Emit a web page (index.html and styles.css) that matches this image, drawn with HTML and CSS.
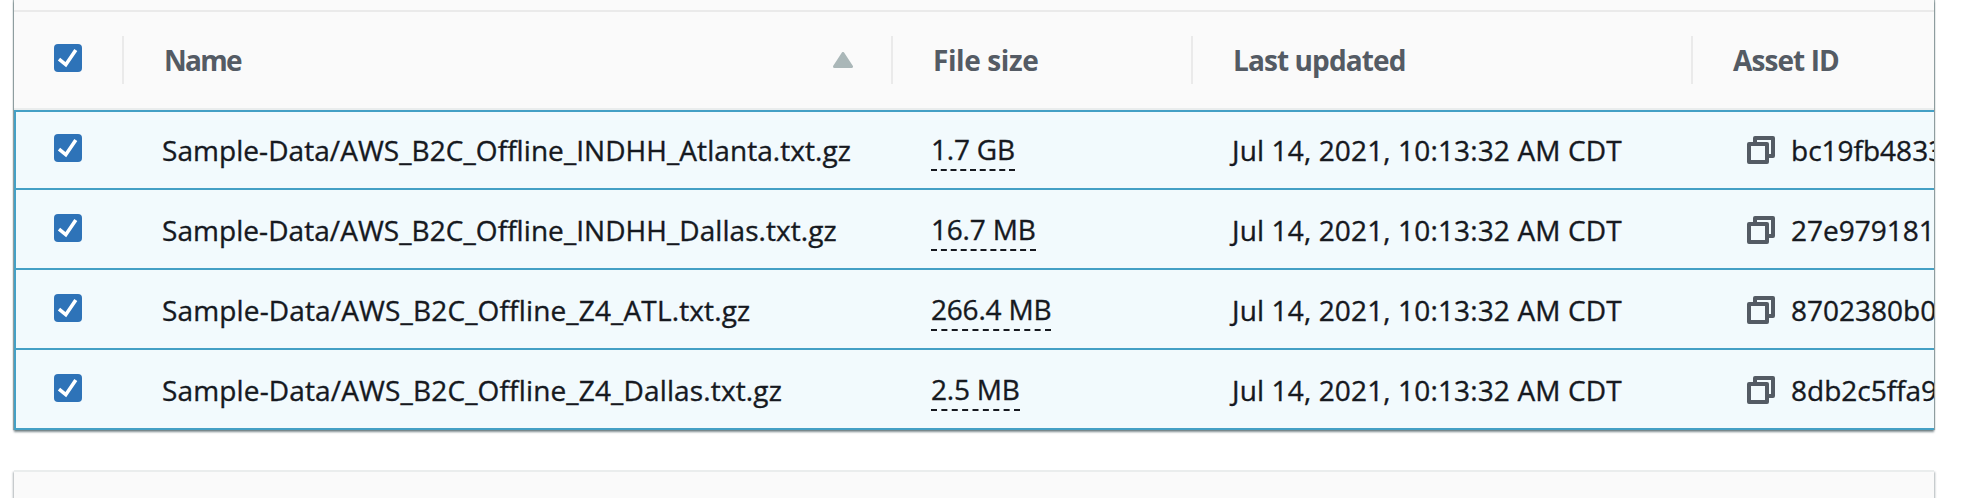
FILE: index.html
```
<!DOCTYPE html>
<html lang="en"><head><meta charset="utf-8"><title>Assets</title><link rel="stylesheet" href="styles.css"></head>
<body>
<svg class="defs" width="0" height="0"><defs>
<symbol id="check" viewBox="0 0 28 28"><rect width="28" height="28" rx="4" fill="#2e73b8"/><path d="M5 15.2 11.8 20.7 21.8 6" fill="none" stroke="#fff" stroke-width="3.6"/></symbol>
<symbol id="copy" viewBox="0 0 28 28"><path d="M8 6V2H26V20H22M2 8H20V26H2Z" fill="none" stroke="#545b64" stroke-width="4" stroke-linejoin="round"/></symbol>
</defs></svg>
<main class="page">
<section class="panel">
<div class="toolbar"></div>
<div class="row head">
<div class="cell select"><svg class="box"><use href="#check"/></svg></div>
<div class="cell name"><span class="t">Name</span><svg class="sort" viewBox="0 0 20 16"><path d="M10 1.5 18.5 14.5H1.5Z" fill="#aab7b8" stroke="#aab7b8" stroke-width="3" stroke-linejoin="round"/></svg></div>
<div class="cell size"><span class="t">File size</span></div>
<div class="cell date"><span class="t">Last updated</span></div>
<div class="cell asset"><span class="t">Asset ID</span></div>
</div>
<div class="row item"><div class="cell select"><svg class="box"><use href="#check"/></svg></div><div class="cell name"><span class="t">Sample-Data/AWS_B2C_Offline_INDHH_Atlanta.txt.gz</span></div><div class="cell size"><span class="dash">1.7 GB</span></div><div class="cell date"><span class="t">Jul 14, 2021, 10:13:32 AM CDT</span></div><div class="cell asset"><svg class="copy"><use href="#copy"/></svg><span class="t">bc19fb4833</span></div></div>
<div class="row item"><div class="cell select"><svg class="box"><use href="#check"/></svg></div><div class="cell name"><span class="t">Sample-Data/AWS_B2C_Offline_INDHH_Dallas.txt.gz</span></div><div class="cell size"><span class="dash">16.7 MB</span></div><div class="cell date"><span class="t">Jul 14, 2021, 10:13:32 AM CDT</span></div><div class="cell asset"><svg class="copy"><use href="#copy"/></svg><span class="t">27e979181</span></div></div>
<div class="row item wide"><div class="cell select"><svg class="box"><use href="#check"/></svg></div><div class="cell name"><span class="t">Sample-Data/AWS_B2C_Offline_Z4_ATL.txt.gz</span></div><div class="cell size"><span class="dash">266.4 MB</span></div><div class="cell date"><span class="t">Jul 14, 2021, 10:13:32 AM CDT</span></div><div class="cell asset"><svg class="copy"><use href="#copy"/></svg><span class="t">8702380b0</span></div></div>
<div class="row item wide"><div class="cell select"><svg class="box"><use href="#check"/></svg></div><div class="cell name"><span class="t">Sample-Data/AWS_B2C_Offline_Z4_Dallas.txt.gz</span></div><div class="cell size"><span class="dash">2.5 MB</span></div><div class="cell date"><span class="t">Jul 14, 2021, 10:13:32 AM CDT</span></div><div class="cell asset"><svg class="copy"><use href="#copy"/></svg><span class="t">8db2c5ffa9</span></div></div>
</section>
<section class="panel next"></section>
</main>
</body></html>
```
FILE: styles.css
```
* { box-sizing: border-box; }
body { margin: 0; background: #fff; font: 28px/40px "Open Sans", "Noto Sans", sans-serif; color: #16191f; overflow: hidden; }
.defs { display: block; }
.page { height: 498px; padding: 0 28px 0 14px; display: flex; flex-direction: column; gap: 40px; overflow: hidden; }
.panel { flex: none; height: 430px; background: #fafafa; box-shadow: 0 2px 2px rgba(0,28,36,.5), 1px 0 1px #aab7b8, -1px 0 1px #aab7b8; }
.next { height: 60px; border-top: 2px solid #eaeded; box-shadow: 1px 2px 2px rgba(0,28,36,.3), -1px 2px 2px rgba(0,28,36,.3); }
.toolbar { height: 12px; border-bottom: 2px solid #eaeaea; }
.row { display: grid; grid-template-columns: 110px 769px 300px 500px 241px; overflow: hidden; }
.cell { display: flex; align-items: center; white-space: nowrap; min-width: 0; }
.box { width: 28px; height: 28px; display: block; }
.select { padding-left: 40px; }
.head { height: 98px; border-bottom: 2px solid #eaeded; color: #545b64; font-weight: 700; font-stretch: 90%; letter-spacing: -0.9px; }
.head .name { letter-spacing: -1.7px; }
.head .size { letter-spacing: -0.4px; }
.head .cell { height: 96px; }
.head .box { margin-bottom: 4px; }
.head .cell + .cell { height: 48px; margin: 24px 0; border-left: 2px solid #eaeaea; margin-left: -2px; padding-left: 40px; }
.sort { width: 20px; height: 16px; margin: 0 40px 0 auto; }
.item { height: 80px; padding-top: 2px; border-bottom: 2px solid #44a0c5; border-left: 2px solid #44a0c5; background: #f2fafd; grid-template-columns: 108px 769px 300px 500px 241px; font-stretch: 90%; -webkit-text-stroke: 0.35px #16191f; }
.head + .item { padding-top: 0; border-top: 2px solid #44a0c5; }
.item .select { padding-left: 38px; }
.item .box { margin-bottom: 4px; }
.item .name { padding-left: 38px; letter-spacing: 0.06px; }
.wide .name { letter-spacing: 0.15px; }
.item .size { padding-left: 38px; letter-spacing: -0.2px; }
.item .date { padding-left: 39px; letter-spacing: 0.14px; }
.item .asset { padding-left: 54px; gap: 16px; overflow: hidden; }
.dash { line-height: 40px; border-bottom: 2px dashed #16191f; }
.copy { width: 28px; height: 28px; flex: none; }
```
